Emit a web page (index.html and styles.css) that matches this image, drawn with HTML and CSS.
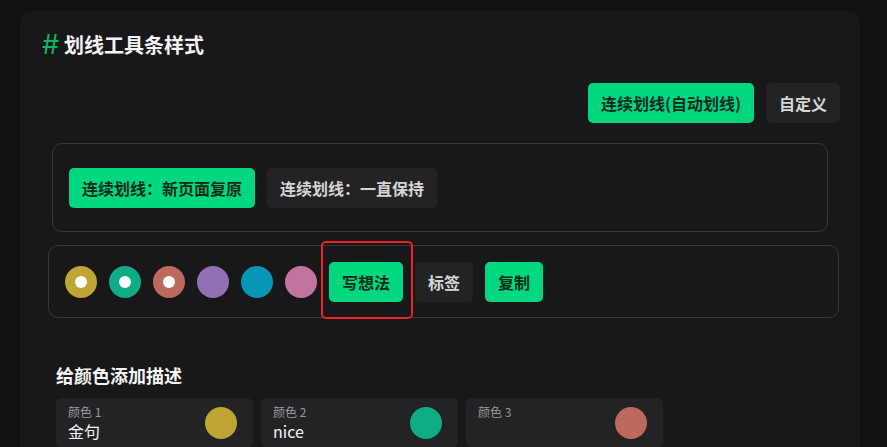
FILE: index.html
```html
<!DOCTYPE html>
<html>

<head>
  <meta charset="utf-8">
  <meta name="viewport" content="width=device-width">
  <title>划线工具条样式</title>

  <link rel="stylesheet" href="styles.css">
</head>

<body>
  <main class="panel">
    <h2 class="title"><span class="hash">#</span>划线工具条样式</h2>

    <section class="mode-row">
      <button class="btn green">连续划线(自动划线)</button>
      <button class="btn">自定义</button>
    </section>

    <section class="box box-mode">
      <button class="btn green">连续划线：新页面复原</button>
      <button class="btn">连续划线：一直保持</button>
    </section>

    <section class="box box-bar">
      <span class="dot gold selected"></span>
      <span class="dot teal selected"></span>
      <span class="dot salmon selected"></span>
      <span class="dot purple"></span>
      <span class="dot blue"></span>
      <span class="dot pink"></span>
      <button class="btn green marked">写想法</button>
      <button class="btn">标签</button>
      <button class="btn green">复制</button>
    </section>

    <h3 class="subtitle">给颜色添加描述</h3>

    <section class="cards">
      <div class="card">
        <div class="card-text">
          <div class="card-label">颜色 1</div>
          <div class="card-value">金句</div>
        </div>
        <span class="dot gold"></span>
      </div>
      <div class="card">
        <div class="card-text">
          <div class="card-label">颜色 2</div>
          <div class="card-value">nice</div>
        </div>
        <span class="dot teal"></span>
      </div>
      <div class="card">
        <div class="card-text">
          <div class="card-label">颜色 3</div>
          <div class="card-value"></div>
        </div>
        <span class="dot salmon"></span>
      </div>
    </section>
  </main>
</body>

</html>
```

FILE: styles.css
```css
* {
  box-sizing: border-box;
}

body {
  margin: 0;
  background-color: #111112;
  font-family: "Noto Sans CJK SC", "Noto Sans", sans-serif;
  color: #f2f2f2;
  height: 447px;
  overflow: hidden;
}

.panel {
  margin: 11px 0 0 20px;
  width: 840px;
  height: 436px;
  overflow: hidden;
  background-color: #18181a;
  border-radius: 12px 12px 0 0;
  padding: 20px 20px 0 0;
}

.title {
  display: flex;
  align-items: center;
  height: 28px;
  margin: 0 0 0 22px;
  font-size: 20px;
  line-height: 28px;
  font-weight: bold;
  color: #f4f4f4;
}

.hash {
  color: #12b35d;
  font-weight: normal;
  font-size: 27px;
  font-family: Inter, "Noto Sans", sans-serif;
  margin-right: 5px;
}

.mode-row {
  display: flex;
  justify-content: flex-end;
  gap: 12px;
  margin-top: 24px;
}

.btn {
  height: 40px;
  padding: 0 13px;
  border: none;
  border-radius: 5px;
  background-color: #232325;
  color: #d6d6d6;
  font-family: inherit;
  font-size: 16px;
  font-weight: bold;
  line-height: 40px;
}

.btn.green {
  background-color: #00d77f;
  color: #0b2a1b;
}

.box {
  display: flex;
  align-items: center;
  gap: 12px;
  border: 1px solid #38383b;
  border-radius: 10px;
}

.box-mode {
  margin: 20px 12px 0 32px;
  padding: 24px 16px 23px;
}

.box-bar {
  margin: 13px 1px 0 28px;
  padding: 16px 16px 15px;
}

.dot {
  width: 32px;
  height: 32px;
  border-radius: 50%;
  flex-shrink: 0;
  display: flex;
  align-items: center;
  justify-content: center;
}

.dot.selected::after {
  content: "";
  width: 12px;
  height: 12px;
  border-radius: 50%;
  background-color: #fff;
}

.gold { background-color: #bea534; }
.teal { background-color: #0ead86; }
.salmon { background-color: #bd6a5e; }
.purple { background-color: #9270b6; }
.blue { background-color: #0896b8; }
.pink { background-color: #c274a0; }

.marked {
  position: relative;
}

.marked::after {
  content: "";
  position: absolute;
  top: -21px;
  bottom: -17px;
  left: -8px;
  right: -10px;
  border: 2px solid #ec2424;
  border-radius: 5px;
}

.subtitle {
  margin: 44px 0 0 36px;
  font-size: 18px;
  line-height: 26px;
  font-weight: bold;
  color: #f4f4f4;
}

.cards {
  display: flex;
  gap: 8px;
  margin: 10px 0 0 36px;
}

.card {
  width: 197px;
  display: flex;
  align-items: center;
  justify-content: space-between;
  padding: 6px 16px 6px 12px;
  background-color: #232325;
  border-radius: 6px;
}

.card-label {
  font-size: 12px;
  line-height: 16px;
  color: #9a9a9c;
}

.card-value {
  font-size: 16px;
  line-height: 22px;
  height: 22px;
  color: #f4f4f4;
}
```
